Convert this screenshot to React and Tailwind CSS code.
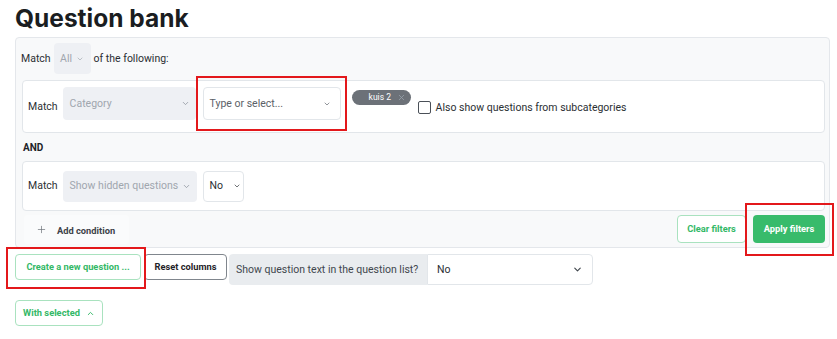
import React from 'react';
import { ChevronDown, ChevronUp, Plus, X } from 'lucide-react';

const font = { fontFamily: 'Roboto, "Liberation Sans", sans-serif' };

function GraySelect({ label, className = '' }) {
    return (
        <div className={`shrink-0 flex items-center justify-between rounded bg-[#eef0f4] pl-[7px] pr-[6px] text-[10.5px] text-[#a0a6ae] ${className}`}>
            <span className="whitespace-nowrap">{label}</span>
            <ChevronDown className="w-[9px] h-[9px] text-[#8a9099]" strokeWidth={2} />
        </div>
    );
}

function RedBox({ className }) {
    return <div className={`absolute border-2 border-[#e3181b] pointer-events-none ${className}`} />;
}

export default function App() {
    return (
        <div className="relative w-[837px] h-[339px] bg-white text-[#1f2328]" style={font}>
            <h1 className="pl-[15px] pt-[3px] h-[37px] text-[24.5px] leading-[30px] font-bold text-[#1a1d21]" style={{ fontFamily: 'Inter, Roboto, sans-serif' }}>
                Question bank
            </h1>

            {/* filter panel */}
            <div className="ml-[15px] w-[815px] h-[211px] rounded border border-[#e4e7eb] bg-[#f8f9fa] pl-[5px] pr-[4px] pt-[5px]">
                <div className="flex items-center h-[31px] text-[10.5px]">
                    <span className="text-[#2b2f33]">Match</span>
                    <div className="ml-[3px] flex items-center gap-[4px] h-[31px] w-[37px] justify-center rounded bg-[#eef0f4] text-[#a0a6ae]">
                        <span>All</span>
                        <ChevronDown className="w-[8px] h-[8px]" strokeWidth={2} />
                    </div>
                    <span className="ml-[3px] text-[#2b2f33]">of the following:</span>
                </div>

                <div className="ml-[1px] mt-[6px] h-[53px] w-[803px] rounded border border-[#e2e6ea] bg-white flex items-start pl-[5px] pt-[6px]">
                    <span className="mt-[12px] text-[10.5px] text-[#2b2f33]">Match</span>
                    <GraySelect label="Category" className="ml-[5px] w-[133px] h-[33px]" />
                    <div className="shrink-0 ml-[7px] flex items-center justify-between w-[138px] h-[33px] rounded border border-[#e2e6ea] pl-[6px] pr-[9px] text-[10.5px] text-[#5b6168]">
                        <span>Type or select...</span>
                        <ChevronDown className="w-[8px] h-[8px]" strokeWidth={2} />
                    </div>
                    <div className="shrink-0 ml-[11px] mt-[3px] flex items-center justify-between w-[59px] h-[15px] rounded-full bg-[#6c7178] pl-[17px] pr-[5px]">
                        <span className="text-[8.5px] text-white">kuis 2</span>
                        <X className="w-[9px] h-[9px] text-[#9aa3ad]" strokeWidth={2} />
                    </div>
                    <div className="ml-[7px] mt-[13px] flex items-center">
                        <div className="shrink-0 w-[13px] h-[13px] rounded-[2px] border border-[#4a5058]" />
                        <span className="ml-[5px] text-[10.5px] text-[#2b2f33] whitespace-nowrap">Also show questions from subcategories</span>
                    </div>
                </div>

                <div className="ml-[1px] mt-[7px] pl-[1px] text-[10px] font-bold text-[#1f2328] h-[21px] leading-[15px]">AND</div>

                <div className="ml-[1px] h-[50px] w-[803px] rounded border border-[#e2e6ea] bg-white flex items-center pl-[5px]">
                    <span className="text-[10.5px] text-[#2b2f33]">Match</span>
                    <GraySelect label="Show hidden questions" className="ml-[5px] w-[134px] h-[31px]" />
                    <div className="shrink-0 ml-[6px] flex items-center gap-[10px] w-[41px] h-[31px] rounded border border-[#e2e6ea] pl-[6px] text-[10.5px] text-[#2b2f33]">
                        <span>No</span>
                        <ChevronDown className="w-[8px] h-[8px]" strokeWidth={2} />
                    </div>
                </div>

                <div className="ml-[1px] mt-[4px] flex items-start w-[803px]">
                    <div className="ml-[2px] flex items-center w-[105px] h-[29px] rounded bg-[#fafbfc] pl-[12px] text-[9.3px] font-bold text-[#3c4147]">
                        <Plus className="w-[11px] h-[11px] text-[#6b7078]" strokeWidth={1.5} />
                        <span className="ml-[10px] mt-[2px]">Add condition</span>
                    </div>
                    <div className="ml-auto flex gap-[7px]">
                        <div className="flex items-center justify-center w-[69px] h-[28px] rounded border border-[#a9e2bf] bg-white text-[9.3px] font-bold text-[#33b866]">Clear filters</div>
                        <div className="flex items-center justify-center w-[72px] h-[28px] rounded bg-[#38bb6b] text-[9.3px] font-bold text-white">Apply filters</div>
                    </div>
                </div>
            </div>

            <div className="mt-[6px] pl-[15px] flex items-start">
                <div className="shrink-0 flex items-center justify-center w-[126px] h-[26px] rounded border border-[#a9e2bf] text-[9.3px] font-bold text-[#33b866]">Create a new question ...</div>
                <div className="shrink-0 ml-[3px] flex items-center justify-center w-[83px] h-[26px] rounded border border-[#80868d] text-[9.3px] font-bold text-[#1f2328]">Reset columns</div>
                <div className="ml-[2px] flex h-[31px]">
                    <div className="flex items-center w-[198px] rounded-l bg-[#e9ecef] pl-[7px] text-[10.5px] text-[#41474e] whitespace-nowrap">Show question text in the question list?</div>
                    <div className="flex items-center justify-between w-[166px] rounded-r border border-[#e2e6ea] pl-[9px] pr-[9px] text-[10.5px] text-[#2b2f33]">
                        <span>No</span>
                        <ChevronDown className="w-[11px] h-[11px] text-[#41474e]" strokeWidth={2.5} />
                    </div>
                </div>
            </div>

            <div className="mt-[15px] ml-[15px] flex items-center justify-center gap-[6px] w-[88px] h-[26px] rounded border border-[#a9e2bf] text-[9.3px] font-bold text-[#33b866]">
                <span>With selected</span>
                <ChevronUp className="w-[9px] h-[9px]" strokeWidth={2.5} />
            </div>

            <RedBox className="left-[196px] top-[76px] w-[151px] h-[55px]" />
            <RedBox className="left-[745px] top-[203px] w-[89px] h-[53px]" />
            <RedBox className="left-[6px] top-[247px] w-[140px] h-[42px]" />
        </div>
    );
}
